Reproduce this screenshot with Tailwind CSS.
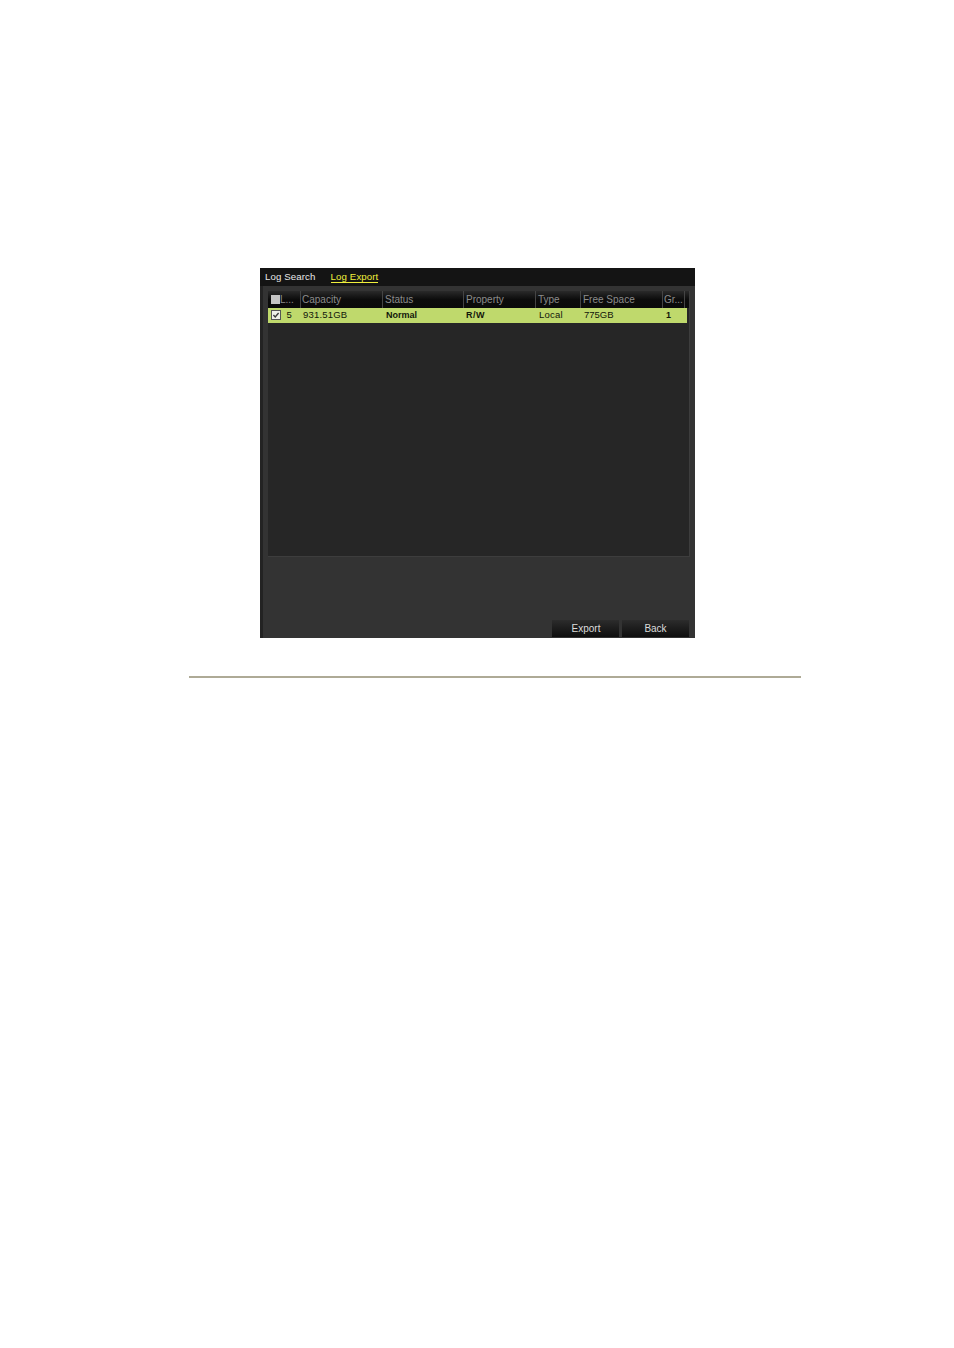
<!DOCTYPE html>
<html lang="en">
<head>
    <meta charset="UTF-8">
    <title>Log Export</title>
    <script src="https://cdn.jsdelivr.net/npm/@tailwindcss/browser@4"></script>
</head>
<body class="bg-white min-h-screen font-['Liberation_Sans',Arial,sans-serif]">
    <div class="pt-[268px] pl-[260px]">
        <div class="w-[435px] h-[370px] bg-[#333333] flex flex-col border-l-[3px] border-[#232323]">
            <!-- tabs -->
            <div class="h-[18px] bg-[#141414] flex items-center text-[9.7px] leading-none -ml-[3px] pl-[5px] shrink-0">
                <span class="text-[#e8e8e8] tracking-[0.1px]">Log Search</span>
                <span class="ml-[15px] text-[#f0f03c] border-b border-[#f0f03c] pb-px mt-px tracking-[0.1px]">Log Export</span>
            </div>

            <!-- table -->
            <div class="ml-[5px] mt-[5px] w-[422px] h-[266px] bg-[#262626] border-r border-b border-[#3d3d3d] flex flex-col shrink-0">
                <div class="h-[17px] flex text-[10px] text-[#8c8c8c] bg-gradient-to-b from-[#2a2a2a] via-[#0c0c0c] to-[#0a0a0a] shrink-0">
                    <div class="w-[33px] pl-[3px] flex items-center border-r border-[#444444]">
                        <span class="w-[9px] h-[9px] bg-[#c4c4c4] -mt-px"></span><span>L...</span>
                    </div>
                    <div class="w-[82px] pl-[1px] flex items-center border-r border-[#444444]">Capacity</div>
                    <div class="w-[81px] pl-[2px] flex items-center border-r border-[#444444]">Status</div>
                    <div class="w-[72px] pl-[2px] flex items-center border-r border-[#444444]">Property</div>
                    <div class="w-[45px] pl-[2px] flex items-center border-r border-[#444444]">Type</div>
                    <div class="w-[82px] pl-[2px] flex items-center border-r border-[#444444]">Free Space</div>
                    <div class="w-[22px] pl-[1px] flex items-center border-r border-[#444444]">Gr...</div>
                </div>
                <div class="h-[15px] w-[419px] flex items-center text-[9.5px] text-[#12160a] bg-[#bfd96c] shrink-0">
                    <div class="w-[32px] pl-[2.5px] flex items-center">
                        <span class="w-[10px] h-[10px] -mt-[2px] bg-[#eef0e8] border border-[#555555] flex items-center justify-center">
                            <svg width="8" height="8" viewBox="0 0 8 8" fill="none" stroke="#3a3a3a" stroke-width="1.4"><path d="M1.4 4l1.8 1.9L6.6 2"/></svg>
                        </span>
                        <span class="ml-[6px]">5</span>
                    </div>
                    <div class="w-[83px] pl-[3px] tracking-[0.2px]">931.51GB</div>
                    <div class="w-[80px] pl-[3px] font-bold text-[9px]">Normal</div>
                    <div class="w-[73px] pl-[3px] font-bold text-[9px] tracking-[0.5px]">R/W</div>
                    <div class="w-[45px] pl-[3px] tracking-[0.2px]">Local</div>
                    <div class="w-[82px] pl-[3px]">775GB</div>
                    <div class="pl-[3px] font-bold text-[9px]">1</div>
                </div>
            </div>

            <!-- buttons -->
            <div class="flex-1 flex items-end justify-end gap-[3px] pr-[6px] pb-px">
                <button class="w-[67px] h-[17px] pl-px text-[10px] text-[#dcdcdc] bg-gradient-to-b from-[#2c2c2c] to-[#0e0e0e] leading-none">Export</button>
                <button class="w-[67px] h-[17px] text-[10px] text-[#dcdcdc] bg-gradient-to-b from-[#2c2c2c] to-[#0e0e0e] leading-none">Back</button>
            </div>
        </div>
        <div class="w-[612px] h-[2px] bg-[#aeaa96] mt-[38px] -ml-[71px]"></div>
    </div>
</body>
</html>
